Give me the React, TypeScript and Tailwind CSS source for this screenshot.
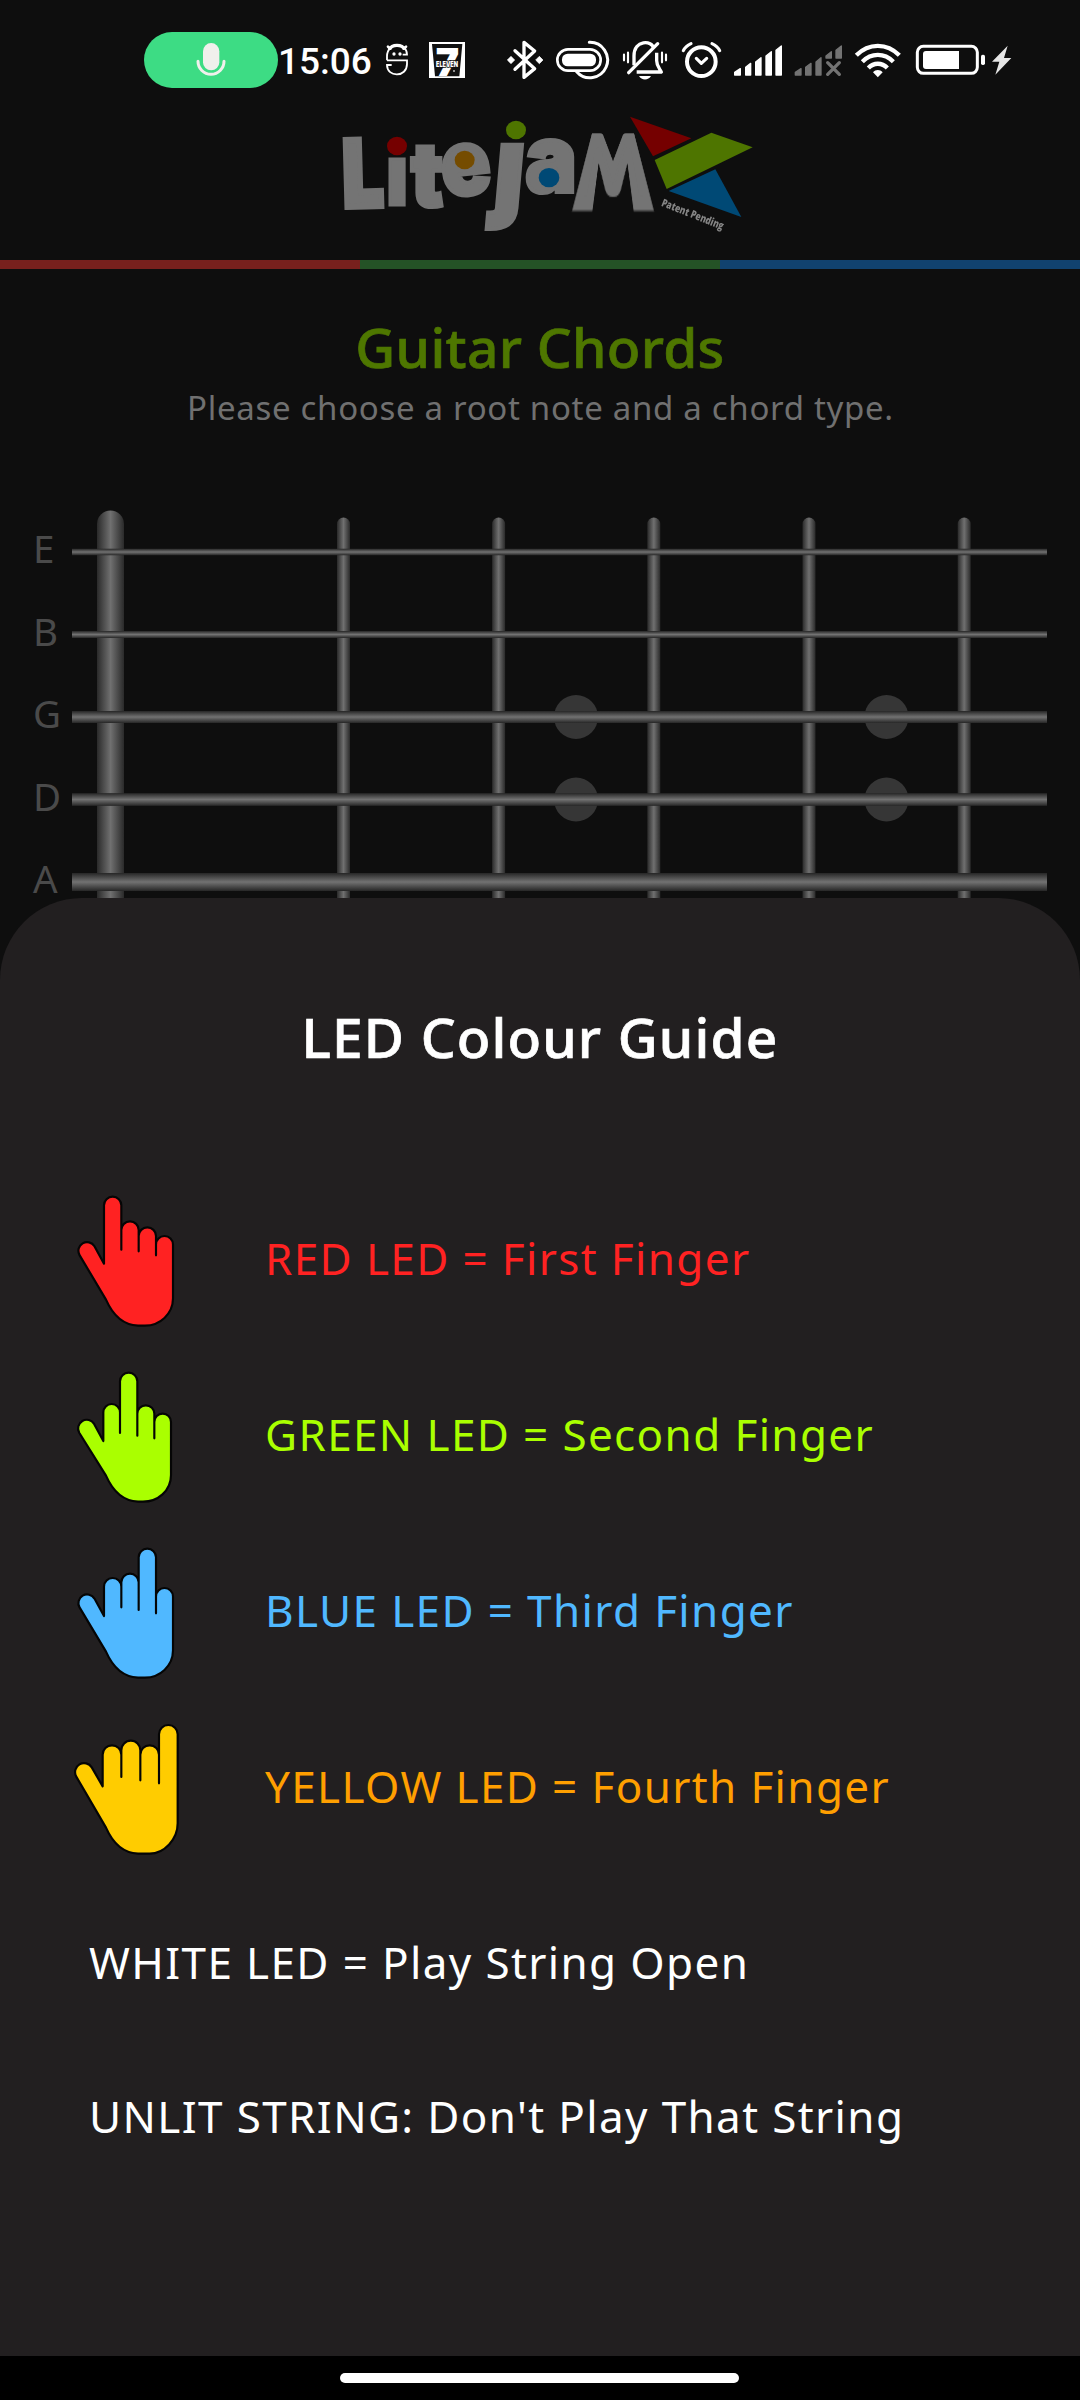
import React from "react";

type HandProps = {
  fill: string;
  xs: number[];
  tops: number[];
  slits: number[];
  thumb: [number, number, number];
  notch: number;
  wrist: number;
};

const GUIDE: { label: string; color: string; hand: HandProps }[] = [
  {
    label: "RED LED = First Finger",
    color: "text-[#ff2222]",
    hand: { fill: "#ff2222", xs: [162, 214, 266, 318, 369], tops: [82, 156, 174, 200], slits: [239, 244, 256], thumb: [111, 242, 26], notch: 281, wrist: 385 },
  },
  {
    label: "GREEN LED = Second Finger",
    color: "text-[#aaff00]",
    hand: { fill: "#aaff00", xs: [160, 210, 262, 313, 363], tops: [176, 82, 180, 205], slits: [261, 269, 277], thumb: [110, 247, 26], notch: 285, wrist: 387 },
  },
  {
    label: "BLUE LED = Third Finger",
    color: "text-[#50b8ff]",
    hand: { fill: "#50b8ff", xs: [162, 214, 266, 318, 369], tops: [170, 157, 82, 200], slits: [256, 264, 274], thumb: [111, 243, 26], notch: 282, wrist: 385 },
  },
  {
    label: "YELLOW LED = Fourth Finger",
    color: "text-[#ff9f00]",
    hand: { fill: "#ffcc00", xs: [158, 214, 271, 327, 383], tops: [144, 130, 144, 83], slits: [237, 247, 256], thumb: [102, 222, 27], notch: 265, wrist: 376 },
  },
];

function Hand({ fill, xs, tops, slits, thumb, notch, wrist }: HandProps) {
  const [tx, ty, tr] = thumb;
  const nx = tr * 0.86;
  const ny = tr * 0.51;
  const fingers = tops
    .map((top, i) => {
      const r = (xs[i + 1] - xs[i]) / 2;
      const end = i < 3 ? slits[i] : wrist;
      return `L${xs[i]} ${top - 2 + r} A${r} ${r} 0 0 1 ${xs[i + 1]} ${top - 2 + r} L${xs[i + 1]} ${end}`;
    })
    .join(" ");
  const right = xs[4];
  const d = `M${xs[0]} ${notch} ${fingers} C${right} ${wrist + 48} ${right - 40} 467 ${right - 84} 467 H264 C215 465 186 430 168 389 L${tx - nx} ${ty + ny} A${tr} ${tr} 0 0 1 ${tx + nx} ${ty - ny} Z`;
  return (
    <svg viewBox="66 0 324 528" className="h-[176px] w-[108px] shrink-0">
      <path d={d} fill={fill} stroke="#050505" strokeWidth="6.5" strokeLinejoin="round" />
    </svg>
  );
}

function StatusBar() {
  return (
    <div className="flex h-[116px] shrink-0 items-center pt-1 pl-36 text-white">
      <div className="flex h-14 w-[134px] items-center justify-center rounded-full bg-[#3ddc84]">
        <svg viewBox="228 90 90 120" className="h-10 w-[30px]">
          <rect x="249" y="99" width="49" height="82" rx="24.5" fill="#f0f0ec" />
          <path d="M234 154 a39 39 0 0 0 78 0" fill="none" stroke="#f0f0ec" strokeWidth="9" strokeLinecap="round" />
        </svg>
      </div>
      <span className="relative top-0.5 w-[106px] font-['Roboto',sans-serif] text-[37px] leading-10 font-medium">15:06</span>
      <svg viewBox="792 90 81 120" className="h-10 w-[27px]">
        <path d="M801 151 V139 C801 96 861 96 861 134 H848" fill="none" stroke="#fff" strokeWidth="5.5" />
        <path d="M801 151 H861 V162 C861 203 801 203 801 165 H815" fill="none" stroke="#fff" strokeWidth="5.5" />
        <path d="M804 110 L811 116 M858 110 L851 116" stroke="#fff" strokeWidth="8" strokeLinecap="round" />
        <path d="M808 118 C816 102 846 102 854 118" fill="none" stroke="#fff" strokeWidth="10" />
        <circle cx="822" cy="132" r="5" fill="#fff" />
        <circle cx="840" cy="132" r="5" fill="#fff" />
      </svg>
      <svg viewBox="927 90 108 120" className="ml-[18px] h-10 w-9 overflow-visible">
        <rect x="927" y="96" width="108" height="108" fill="#fff" />
        <path d="M936 102 H1027 L1018 199 H945Z" fill="#111" />
        <text x="947" y="199" fontSize="116" fontWeight="900" textLength="70" lengthAdjust="spacingAndGlyphs" fill="#fff" className="font-['Inter',sans-serif]">
          7
        </text>
        <text x="948" y="172" fontSize="23" fontWeight="900" textLength="66" lengthAdjust="spacingAndGlyphs" fill="#fff" stroke="#111" strokeWidth="5" paintOrder="stroke" className="font-['Inter',sans-serif]">
          ELEVEN
        </text>
        <circle cx="1002" cy="183" r="3" fill="#bbb" />
      </svg>
      <svg viewBox="45 60 120 120" className="ml-10 size-10">
        <path d="M75 92 L134 146 L102 172 V67 L134 93 L75 148" fill="none" stroke="#fff" strokeWidth="10" strokeLinejoin="round" strokeLinecap="round" />
        <path d="M52 120 l11 -11 l11 11 l-11 11Z M137 120 l11 -11 l11 11 l-11 11Z" fill="#fff" stroke="#fff" strokeWidth="2" strokeLinejoin="round" />
      </svg>
      <svg viewBox="195 60 165 120" className="ml-2.5 h-10 w-[55px]">
        <rect x="202" y="88" width="130" height="64" rx="32" fill="none" stroke="#fff" strokeWidth="8" />
        <rect x="216" y="101" width="102" height="38" rx="17" fill="#fff" />
        <path d="M298 67 A53 53 0 1 1 260 155" fill="none" stroke="#fff" strokeWidth="9" strokeLinecap="round" />
      </svg>
      <svg viewBox="393 60 144 120" className="ml-[11px] h-10 w-12">
        <path d="M432 136 V108 C432 58 487 60 491 85 M500 98 V122 C500 138 508 145 514 156 H440" fill="none" stroke="#fff" strokeWidth="10" strokeLinejoin="round" />
        <path d="M416 158 L503 71" stroke="#fff" strokeWidth="10" strokeLinecap="round" />
        <path d="M447 168 H483 C476 182 454 182 447 168Z" fill="#fff" />
        <path d="M402 104 V121 M414 98 V127 M516 98 V127 M528 104 V121" stroke="#fff" strokeWidth="6.5" strokeLinecap="round" />
      </svg>
      <svg viewBox="573 60 123 120" className="ml-3 h-10 w-[41px]">
        <circle cx="634" cy="125" r="43" fill="none" stroke="#fff" strokeWidth="12" />
        <path d="M619 115 L634 130 L650 115" fill="none" stroke="#fff" strokeWidth="9.5" strokeLinecap="round" strokeLinejoin="round" />
        <path d="M580 92 C585 82 594 75 603 71 M666 71 C675 75 684 82 689 92" fill="none" stroke="#fff" strokeWidth="9.5" strokeLinecap="round" />
      </svg>
      <svg viewBox="729 60 150 120" className="ml-[11px] h-10 w-[50px]">
        <path d="M734 165 V157 L751 146 V165Z M767 165 V142 L782 130 V165Z M797 165 V126 L813 113 V165Z M828 165 V108 L844 95 V165Z M858 165 V91 L874 78 V165Z" fill="#fff" stroke="#fff" strokeWidth="4" strokeLinejoin="round" />
      </svg>
      <svg viewBox="72 60 147 120" className="ml-[11px] h-10 w-[49px]">
        <g fill="#737373" stroke="#737373" strokeWidth="4" strokeLinejoin="round">
          <path d="M76 165 V157 L93 146 V165Z M107 165 V142 L123 130 V165Z M138 165 V126 L153 113 V165Z M168 114 V108 L184 95 V114Z M198 114 V91 L214 78 V114Z" />
          <path d="M173 128 L208 163 M208 128 L173 163" strokeWidth="10" strokeLinecap="round" />
        </g>
      </svg>
      <svg viewBox="252 60 144 120" className="ml-[11px] h-10 w-12">
        <g fill="none" stroke="#fff" strokeWidth="13">
          <path d="M259 106 C296 68 351 68 388 106" />
          <path d="M277 125 C304 98 343 98 370 125" />
          <path d="M295 144 C311 127 336 127 352 144" />
        </g>
        <path d="M309 157 C317 148 330 148 338 157 L323.500 172Z" fill="#fff" />
      </svg>
      <svg viewBox="435 60 213 120" className="ml-[13px] h-10 w-[71px]">
        <rect x="442" y="79" width="180" height="81" rx="18" fill="none" stroke="#fff" strokeWidth="9" />
        <path d="M567 93 V147 H468 Q459 147 459 138 V102 Q459 93 468 93Z" fill="#fff" />
        <rect x="633" y="104" width="12" height="31" rx="5" fill="#fff" />
      </svg>
      <svg viewBox="663 60 63 120" className="ml-[5px] h-10 w-[21px]">
        <path d="M713 77 L666 125 H688 L676 164 L724 114 H702Z" fill="#e6e6e6" />
      </svg>
    </div>
  );
}

type Letter = {
  char: string;
  /** Ink box of the glyph at 200px: left, right, ascent, descent. */
  ink: [number, number, number, number];
  /** Box the inked and stroked glyph fills: x, y, width, height. */
  box: [number, number, number, number];
  stroke: number;
  rotate: number;
  skew?: number;
  clip?: string;
};

const LETTERS: Letter[] = [
  { char: "L", ink: [9, 108, 146, 0], box: [69, 110, 123, 218], stroke: 18, rotate: -1.5 },
  { char: "i", ink: [9, 50, 156, 0], box: [204, 111, 54, 207], stroke: 9, rotate: 0, clip: "url(#stem-i)" },
  { char: "t", ink: [1, 77, 135, 2], box: [268, 133, 103, 194], stroke: 12, rotate: 0 },
  { char: "e", ink: [6, 116, 111, 2], box: [365, 126, 146, 166], stroke: 12, rotate: -6 },
  { char: "j", ink: [-7, 50, 156, 41], box: [508, 50, 98, 343], stroke: 12, rotate: 0, skew: -5, clip: "url(#stem-j)" },
  { char: "a", ink: [4, 110, 111, 2], box: [616, 116, 148, 170], stroke: 12, rotate: 0 },
];

function Logo() {
  return (
    <div className="relative h-[116px] w-[415px]">
      {/* The last letter splays outwards towards its feet. */}
      <span className="absolute -top-2.5 left-[224px] w-[98px] origin-[50%_54px] text-center font-['Lato',sans-serif] text-[103px] leading-[103px] font-black text-[#747474] [-webkit-text-stroke:9px_#747474] [transform:scale(0.61,1.3)_perspective(100px)_rotateX(50deg)]">
        M
      </span>
      <svg viewBox="60 48 1245 348" className="relative h-[116px] w-[415px] overflow-visible">
        <defs>
          <clipPath id="stem-i">
            <rect x="180" y="168" width="100" height="160" />
          </clipPath>
          <clipPath id="stem-j">
            <rect x="480" y="124" width="160" height="280" />
          </clipPath>
        </defs>
        {LETTERS.map((l) => {
          const [left, right, ascent, descent] = l.ink;
          const [x, y, w, h] = l.box;
          const sx = (w - l.stroke) / (right - left);
          const sy = (h - l.stroke) / (ascent + descent);
          const tx = x + l.stroke / 2 - left * sx;
          const ty = y + l.stroke / 2 + ascent * sy;
          const cx = x + w / 2;
          const cy = y + h / 2;
          return (
            <g key={l.char} clipPath={l.clip}>
              <g transform={`translate(${cx} ${cy}) rotate(${l.rotate}) skewX(${l.skew ?? 0}) translate(${-cx} ${-cy})`}>
                <text
                  transform={`translate(${tx} ${ty}) scale(${sx} ${sy})`}
                  fontSize="200"
                  fontWeight="900"
                  fill="#747474"
                  stroke="#747474"
                  strokeWidth={l.stroke / ((sx + sy) / 2)}
                  className="font-['Inter',sans-serif]"
                >
                  {l.char}
                </text>
              </g>
            </g>
          );
        })}
        <ellipse cx="231" cy="138" rx="30" ry="28" fill="#750000" />
        <ellipse cx="434" cy="180" rx="30" ry="28" fill="#754c00" />
        <ellipse cx="588" cy="90" rx="30" ry="28" fill="#4e7500" />
        <ellipse cx="687" cy="233" rx="31" ry="29" fill="#004975" />
        <path d="M930 50 L1114 115 L999 169Z" fill="#750000" />
        <path d="M1174 98 L1298 142 L1040 267 L1004 180Z" fill="#4e7500" />
        <path d="M1186 208 L1264 351 L1046 273Z" fill="#004975" />
        <text transform="translate(1022 317) rotate(21.5)" fontSize="33" fontWeight="800" textLength="198" lengthAdjust="spacingAndGlyphs" fill="#858585" className="font-['Open_Sans',sans-serif]">
          Patent Pending
        </text>
      </svg>
    </div>
  );
}

const STRINGS: { note: string; y: number; width: number }[] = [
  { note: "E", y: 552, width: 6.5 },
  { note: "B", y: 634.5, width: 7 },
  { note: "G", y: 717, width: 12 },
  { note: "D", y: 799.5, width: 12.7 },
  { note: "A", y: 882, width: 18 },
];

function Fretboard() {
  return (
    <div className="mt-[77px] flex h-[391px] shrink-0 pl-[33px]">
      <div className="w-[39px] text-[38.5px] text-[#4a4a4a]">
        {STRINGS.map((s) => (
          <div key={s.note} className="h-[82.5px] leading-[82.5px]">{s.note}</div>
        ))}
      </div>
      <svg viewBox="72 507 975 391" className="h-[391px] w-[975px]">
        <defs>
          <linearGradient id="fret">
            <stop offset="0" stopColor="#2a2a2a" />
            <stop offset="0.5" stopColor="#707070" />
            <stop offset="1" stopColor="#2a2a2a" />
          </linearGradient>
          <linearGradient id="string" x2="0" y2="1">
            <stop offset="0" stopColor="#262626" />
            <stop offset="0.5" stopColor="#727272" />
            <stop offset="1" stopColor="#262626" />
          </linearGradient>
        </defs>
        <rect x="97" y="510.500" width="27" height="500" rx="13.500" fill="url(#fret)" />
        {[343.5, 498.6, 653.8, 809, 964.2].map((x) => (
          <rect key={x} x={x - 6.5} y="517.500" width="13" height="500" rx="6.500" fill="url(#fret)" />
        ))}
        {[576, 886.5].map((x) => (
          <g key={x} fill="#363636">
            <circle cx={x} cy="717" r="22" />
            <circle cx={x} cy="799.500" r="22" />
          </g>
        ))}
        {STRINGS.map((s) => (
          <rect key={s.note} x="72" y={s.y - s.width / 2} width="975" height={s.width} fill="url(#string)" />
        ))}
      </svg>
    </div>
  );
}

export default function App() {
  return (
    <div className="flex h-[2400px] w-[1080px] flex-col overflow-hidden bg-[#0e0e0e] font-['Noto_Sans',sans-serif]">
      <StatusBar />
      <div className="flex shrink-0 justify-center pl-[15px]">
        <Logo />
      </div>
      <div className="mt-7 grid h-[9px] shrink-0 grid-cols-3">
        <div className="bg-[#78201d]" />
        <div className="bg-[#245226]" />
        <div className="bg-[#11426f]" />
      </div>
      <h1 className="mt-10 text-center text-[55px] leading-[75px] font-medium tracking-[0.3px] text-[#4e7700] [-webkit-text-stroke:0.7px_#4e7700]">Guitar Chords</h1>
      <p className="mt-px pl-px text-center text-[33px] leading-[45px] tracking-[0.69px] text-[#707070]">Please choose a root note and a chord type.</p>
      <Fretboard />
      <section className="relative flex h-[1458px] shrink-0 flex-col rounded-t-[82px] bg-[#221f20] pt-[101px] text-[44px] tracking-[1.375px]">
        <h2 className="text-center text-[55px] leading-[75px] font-medium tracking-[1.15px] text-white [-webkit-text-stroke:0.7px_#ffffff]">LED Colour Guide</h2>
        <ul className="mt-24">
          {GUIDE.map((g) => (
            <li key={g.label} className="flex h-[176px] items-center gap-[85px] pl-[72px]">
              <Hand {...g.hand} />
              <span className={g.color}>{g.label}</span>
            </li>
          ))}
        </ul>
        <p className="flex h-[176px] items-center pl-[89px] text-white">WHITE LED = Play String Open</p>
        <p className="flex h-[132px] items-center pl-[89px] text-white">UNLIT STRING: Don't Play That String</p>
      </section>
      <div className="flex h-[44px] shrink-0 bg-black pt-[17px] pl-[340px]">
        <div className="h-2.5 w-[399px] rounded-full bg-white" />
      </div>
    </div>
  );
}
